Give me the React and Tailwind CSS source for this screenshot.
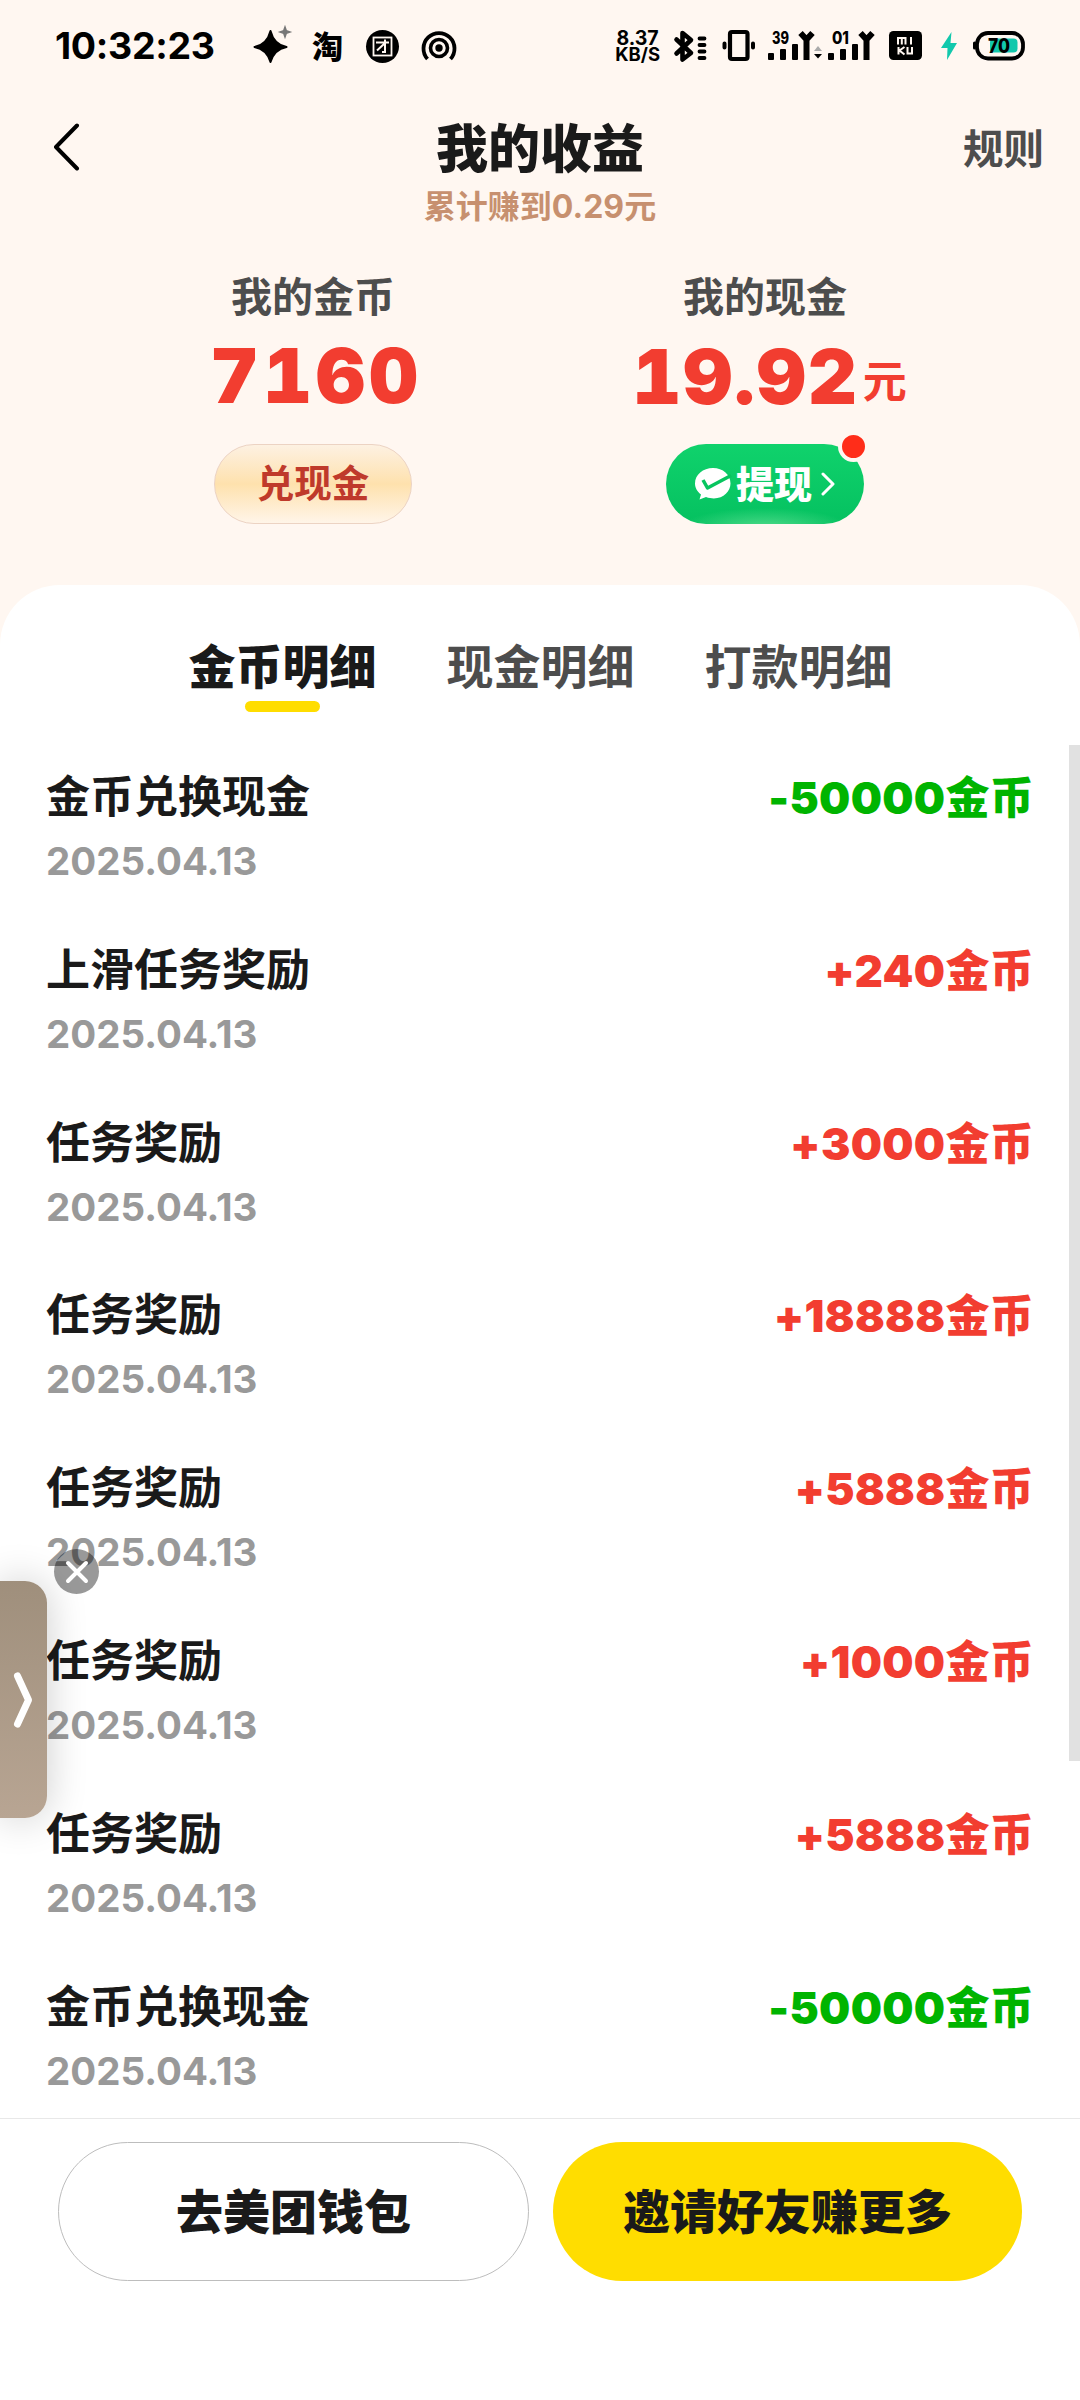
import React from 'react'

const rows = [
   { title: '金币兑换现金', date: '2025.04.13', amount: -50000 },
   { title: '上滑任务奖励', date: '2025.04.13', amount: 240 },
   { title: '任务奖励', date: '2025.04.13', amount: 3000 },
   { title: '任务奖励', date: '2025.04.13', amount: 18888 },
   { title: '任务奖励', date: '2025.04.13', amount: 5888 },
   { title: '任务奖励', date: '2025.04.13', amount: 1000 },
   { title: '任务奖励', date: '2025.04.13', amount: 5888 },
   { title: '金币兑换现金', date: '2025.04.13', amount: -50000 },
]

const tabs = ['金币明细', '现金明细', '打款明细']


// status bar icons share one svg per side, drawn in screen pixels
const StatusLeftIcons = () => (
   <svg className="ml-[32px]" width="216" height="48" viewBox="245 22 216 48">
      <path d="M270.500 31 Q274 44.800 286.500 47 Q274 49.500 270.500 62 Q267 49.500 254.500 47 Q267 44.800 270.500 31Z" fill="#000" stroke="#000" strokeWidth="2" strokeLinejoin="round" />
      <path d="M285 27 L286.300 30.700 L290 32 L286.300 33.300 L285 37 L283.700 33.300 L280 32 L283.700 30.700Z" fill="#777" stroke="#777" strokeWidth="1.500" />
      <text x="312" y="57.500" fontSize="31" fontWeight="900" fontFamily="Noto Sans CJK SC">淘</text>
      <circle cx="382.500" cy="46.500" r="16.500" />
      <rect x="373.500" y="37.500" width="18" height="18" fill="none" stroke="#fff7f1" strokeWidth="1.800" />
      <path d="M376 42.500H389M385 39.500V52H382M384.500 43.500L377 50.500" fill="none" stroke="#fff7f1" strokeWidth="2" />
      <circle cx="439" cy="48" r="3.700" />
      <circle cx="439" cy="48" r="8.500" fill="none" stroke="#000" strokeWidth="3.600" />
      <path d="M427.500 59A15.500 15.500 0 1 1 450.500 59" fill="none" stroke="#000" strokeWidth="3.800" />
   </svg>
)

const Signal = ({ x, label }) => (
   <g>
      <text x={x + 4} y="43.500" fontSize="17" fontWeight="800" fontFamily="Inter" textLength="17" lengthAdjust="spacingAndGlyphs">{label}</text>
      <rect x={x} y="53" width="6" height="7" rx="1" />
      <rect x={x + 12} y="49" width="6" height="11" rx="1" />
      <rect x={x + 24} y="44" width="6" height="16" rx="1" />
      <path d={`M${x + 38.5} 60V38M${x + 32.5} 33L${x + 38.5} 39.500L${x + 44.5} 33`} fill="none" stroke="#000" strokeWidth="6" />
   </g>
)

const StatusRightIcons = () => (
   <svg width="361" height="48" viewBox="667 22 361 48">
      <path d="M676.500 39.500L691 53L682.500 59.500V33L691 40L676.500 53.500" fill="none" stroke="#000" strokeWidth="4.600" strokeLinejoin="round" strokeLinecap="round" />
      <path d="M699.500 38.500H704.500M699.500 45H704.500M699.500 51.500H704.500M699.500 58H704.500" stroke="#000" strokeWidth="3.800" strokeLinecap="round" />
      <rect x="730" y="32" width="17.500" height="27" rx="2" fill="none" stroke="#000" strokeWidth="4.200" />
      <path d="M724.500 43.500V47.500M753 43.500V47.500" stroke="#000" strokeWidth="4" strokeLinecap="round" />
      <Signal x={768} label="39" />
      <path d="M814 51L818 46L822 51Z" fill="#aaa" />
      <path d="M814 54H822L818 58.500Z" />
      <Signal x={828} label="01" />
      <rect x="889" y="31" width="33" height="29" rx="4.500" />
      <path d="M898 44.500V38H905.500V44.500M901.800 38V44.500M911 37V44.500M898.500 47V54.500M904.500 47L899.500 50.500L904.500 54.500M907.500 47V53.500H912V47" fill="none" stroke="#fff7f1" strokeWidth="2" />
      <path d="M951.500 32L941 48H947.500L947 60L957 43H950.500Z" fill="#12c8ac" />
      <rect x="977" y="33" width="46" height="25.500" rx="11" fill="none" stroke="#000" strokeWidth="3.800" />
      <path d="M974.500 43V48" stroke="#000" strokeWidth="3" strokeLinecap="round" />
      <rect x="990" y="38.500" width="27.500" height="14" rx="4" fill="#12c8ac" />
      <text x="988" y="52.500" fontSize="20" fontWeight="800" fontFamily="Inter" textLength="22" lengthAdjust="spacingAndGlyphs">70</text>
   </svg>
)

const StatusBar = () => (
   <div className="flex h-[92px] items-center pr-[52px] pl-[55px] text-black">
      <span className="w-[158px] text-[37.500px] font-bold leading-none whitespace-nowrap tracking-[-0.3px]">10:32:23</span>
      <StatusLeftIcons />
      <div className="mr-[7px] ml-auto text-center text-[19.500px] leading-[16px] font-bold">
         <div>8.37</div>
         <div className="text-[18.500px]">KB/S</div>
      </div>
      <StatusRightIcons />
   </div>
)

const NavBar = () => (
   <div className="grid h-[148px] grid-cols-3 pt-[31px]">
      <svg className="ml-[52px]" width="32" height="52" viewBox="0 0 32 52" fill="none" stroke="#000" strokeWidth="4" strokeLinecap="round" strokeLinejoin="round">
         <path d="M25 2.500L4 24L25 45.500" />
      </svg>
      <div className="flex flex-col items-center whitespace-nowrap">
         <h1 className="mt-px text-[52px] leading-[52px] font-black text-[#1a1a1a]">我的收益</h1>
         <p className="mt-[15px] text-[32px] leading-[32px] font-bold text-[#c7906f]">累计赚到0.29元</p>
      </div>
      <span className="pr-[36px] text-right text-[40.500px] leading-[54px] font-bold text-[#4d4d4d]">规则</span>
   </div>
)

const Balance = () => (
   <div className="flex h-[345px] pt-[31px] text-[#f23d30]">
      <div className="ml-[163px] flex w-[300px] flex-col items-center">
         <span className="text-[41px] leading-[52px] font-bold text-[#4d4d4d]">我的金币</span>
         <span className="mt-[12px] pl-[6px] text-[76px] leading-[80px] font-black tracking-[4px] tabular-nums">7160</span>
         <button className="mt-[29px] h-[80px] w-[198px] rounded-full border border-[#ecd3c3] bg-linear-to-b from-[#fdf1e2] via-[#fee1ad] to-[#fff5e8] text-[37.500px] leading-none font-bold text-[#bf3a2b]">兑现金</button>
      </div>
      <div className="ml-[152px] flex w-[300px] flex-col items-center">
         <span className="text-[41px] leading-[52px] font-bold text-[#4d4d4d]">我的现金</span>
         <span className="mt-[13px] flex items-baseline pl-[9px] text-[76px] leading-[80px] font-black tracking-[2px] whitespace-nowrap tabular-nums">
            19.92<span className="relative -top-[6px] ml-[4px] text-[44px] leading-none font-bold tracking-normal">元</span>
         </span>
         <button className="relative mt-[28px] flex h-[80px] w-[198px] items-center rounded-full bg-[radial-gradient(ellipse_85px_20px_at_50%_105%,#4fdb8a,transparent),linear-gradient(#10d26c,#05c160)] pl-[28px] text-white">
            <svg width="38" height="36" viewBox="0 0 38 36">
               <path d="M19 2C9 2 1 8.500 1 17.500C1 22 3.500 26 7 28.500L5.500 33.500L12 31C26 36 36.500 27 36.500 17.500C36.500 8.500 29 2 19 2Z" fill="#fff" />
               <path d="M9 14L13.500 22L37 9.500" fill="none" stroke="#07c55f" strokeWidth="3.500" strokeLinejoin="round" />
            </svg>
            <span className="ml-[4px] text-[38px] leading-none font-black">提现</span>
            <svg className="ml-[8px]" width="16" height="24" viewBox="0 0 16 24" fill="none" stroke="#fff" strokeWidth="3" strokeLinecap="round" strokeLinejoin="round">
               <path d="M3 2L13 12L3 22" />
            </svg>
            <i className="absolute -top-[13px] -right-[5px] h-[31px] w-[31px] rounded-full border-4 border-[#fff7f1] bg-[#ff2d19]"></i>
         </button>
      </div>
   </div>
)

const Tabs = () => (
   <div className="flex h-[160px] justify-center gap-[70px] pt-[55px] pl-px text-[47px] leading-[54px] whitespace-nowrap text-[#4d4d4d]">
      {tabs.map((tab, index) => (
         <div key={tab} className={`flex flex-col items-center ${index === 0 ? 'font-black text-[#1a1a1a]' : 'font-bold'}`}>
            {tab}
            {index === 0 && <div className="mt-[7px] h-[11px] w-[75px] rounded-full bg-[#ffdd00]"></div>}
         </div>
      ))}
   </div>
)

const Row = ({ title, date, amount }) => (
   <li className="flex h-[172.800px] justify-between pt-[25px] pr-[46px] pl-[46px]">
      <div>
         <div className="text-[44px] leading-[54px] font-bold text-[#1a1a1a]">{title}</div>
         <div className="mt-[13px] text-[38.500px] leading-[48px] font-bold text-[#999999]">{date}</div>
      </div>
      <div className={`text-[44px] leading-[57px] font-black tracking-[0.3px] ${amount < 0 ? 'text-[#00b400]' : 'text-[#f23d30]'}`}>
         {amount > 0 ? '+' : ''}{amount}金币
      </div>
   </li>
)

// collapsed drawer handle stuck on the left edge, with its close button
const FloatingHandle = () => (
   <>
      <div className="absolute top-[1581px] left-0 flex h-[237px] w-[47px] items-center rounded-r-[22px] bg-linear-to-b from-[#9f8f7c] to-[#b8a593] shadow-[0_0_40px_rgba(0,0,0,0.2)]">
         <svg className="ml-[10px]" width="28" height="64" viewBox="0 0 28 64" fill="none" stroke="#fff" strokeWidth="7" strokeLinecap="round" strokeLinejoin="round">
            <path d="M7.500 8L18.500 32L7.500 56" />
         </svg>
      </div>
      <div className="absolute top-[1549px] left-[54px] flex h-[45px] w-[45px] items-center justify-center rounded-full bg-black/40">
         <svg width="24" height="24" viewBox="0 0 24 24" stroke="#fff" strokeWidth="4" strokeLinecap="round">
            <path d="M3 3L21 21M21 3L3 21" />
         </svg>
      </div>
   </>
)

const App = () => {
   return (
      <div className="relative flex h-[2400px] w-[1080px] flex-col overflow-hidden bg-[#fff7f1] font-[Inter,'Noto_Sans_CJK_SC',sans-serif]">
         <StatusBar />
         <NavBar />
         <Balance />
         <main className="flex min-h-0 flex-1 flex-col rounded-t-[60px] bg-white">
            <Tabs />
            <div className="flex min-h-0 flex-1 overflow-hidden">
               <ul className="flex-1">
                  {rows.map((row, index) => <Row key={index} {...row} />)}
               </ul>
               <div className="-ml-[11px] h-[1016px] w-[11px] bg-[#e1e1e1]"></div>
            </div>
            <footer className="flex h-[282px] shrink-0 gap-[24px] border-t border-[#e8e8e8] px-[58px] pt-[23px] text-[47px] leading-none font-black text-[#1a1a1a]">
               <button className="h-[139px] flex-1 rounded-full border border-[#bdbdbd]">去美团钱包</button>
               <button className="h-[139px] flex-1 rounded-full bg-[#ffdd00]">邀请好友赚更多</button>
            </footer>
         </main>
         <FloatingHandle />
      </div>
   )
}

export default App
